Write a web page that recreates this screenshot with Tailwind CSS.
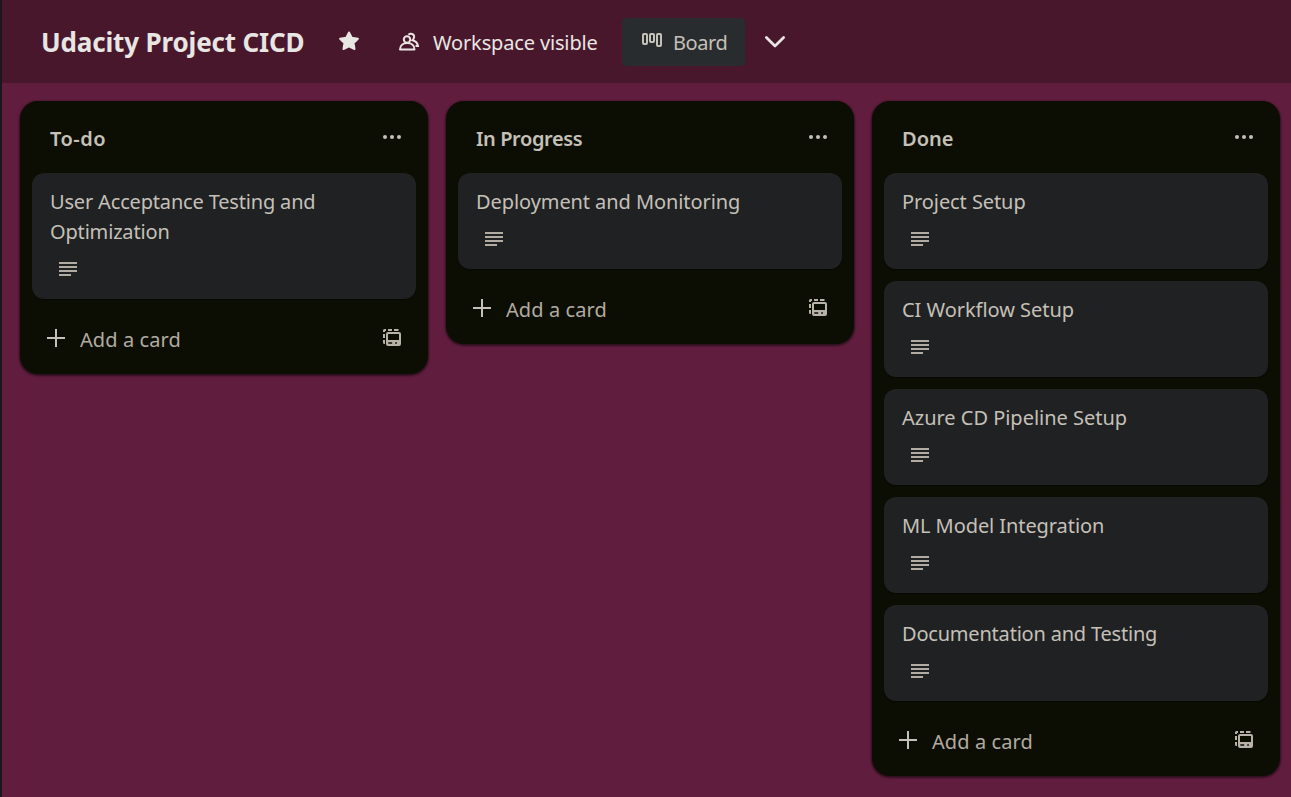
<!DOCTYPE html>
<html lang="en">
<head>
<meta charset="utf-8">
<title>Udacity Project CICD</title>
<script src="https://cdn.jsdelivr.net/npm/@tailwindcss/browser@4"></script>
</head>
<body class="h-[797px] w-[1291px] overflow-hidden border-l-2 border-[#1b171c] bg-[#611d3d] font-['Segoe_UI','Noto_Sans',sans-serif] text-[20px] text-[#c5c0b8]">
<svg class="hidden">
  <symbol id="dots" viewBox="0 0 18 4"><g fill="currentColor"><circle cx="2" cy="2" r="2"/><circle cx="9" cy="2" r="2"/><circle cx="16" cy="2" r="2"/></g></symbol>
  <symbol id="desc" viewBox="0 0 18 14"><path fill="currentColor" d="M0 0h18v2H0zM0 4h18v2H0zM0 8h18v2H0zM0 12h12v2H0z"/></symbol>
  <symbol id="plus" viewBox="0 0 18 18"><path fill="currentColor" d="M8 0h2v8h8v2h-8v8H8v-8H0V8h8z"/></symbol>
  <symbol id="tpl" viewBox="0 0 18 17"><path fill="currentColor" fill-rule="evenodd" d="M5 3h11a2 2 0 0 1 2 2v10a2 2 0 0 1-2 2H5a2 2 0 0 1-2-2V5a2 2 0 0 1 2-2zM5 5v6h11V5zM5.300 13.200v1.500h3.900v-1.500zM12.200 13.200v1.500h1.700v-1.500z"/><path fill="currentColor" d="M0 3V1.500Q0 0 1.500 0H3v2H2v1zM5 0h4v2H5zM11 0h4.500v2H11zM0 5h2v4H0zM0 11h2v4H1.500Q0 15 0 13.500z"/></symbol>
</svg>
<header class="flex h-[83px] items-center bg-[#49172c] pl-[39px] text-[#e8e6e3]">
  <h1 class="w-[297px] whitespace-nowrap text-[26px] leading-[36px] font-bold tracking-[-0.15px]">Udacity Project CICD</h1>
  <svg class="mb-[2px] h-[20px] w-[22px]" viewBox="0 0 22 20"><path fill="currentColor" stroke="currentColor" stroke-width="2" stroke-linejoin="round" d="M11 1.500l2.700 5.200 6.200 1-4.400 4.300 1 6L11 15.400 5.500 18l1-6L2.100 7.700l6.200-1z"/></svg>
  <svg class="ml-[38px] h-[20px] w-[22px]" viewBox="0 0 22 20" fill="none" stroke="currentColor" stroke-width="2"><circle cx="9" cy="7.500" r="3.200"/><path stroke-linejoin="round" d="M2 17.500h14.500c0-4-3-6.500-7.200-6.500S2 13.500 2 17.500z"/><path d="M10.500 2.700c2-2 6-.8 5.600 2.300-.1 1.800-.8 2.500-1.600 3.300 3 .8 5 2.500 5.500 5.700h-2.500"/></svg>
  <span class="ml-[13px] w-[189px] pt-[2px] whitespace-nowrap leading-[30px] tracking-[-0.15px]">Workspace visible</span>
  <div class="flex h-[48px] w-[123px] items-center rounded-[4px] bg-[#282c2e] pl-[20px] text-[#c5c0b8]">
    <svg class="mb-[3px] h-[14px] w-[20px]" viewBox="0 0 20 14" fill="none" stroke="currentColor" stroke-width="2"><rect x="1" y="1" width="4" height="10" rx="1"/><rect x="8" y="1" width="4" height="8" rx="1"/><rect x="15" y="1" width="4" height="12" rx="1"/></svg>
    <span class="ml-[11px] pt-[2px] leading-[30px] tracking-[-0.45px]">Board</span>
  </div>
  <svg class="ml-[20px] h-[12px] w-[20px]" viewBox="0 0 20 12" fill="none" stroke="currentColor" stroke-width="2.700" stroke-linecap="round" stroke-linejoin="round"><path d="M1.400 1.500L10 10l8.600-8.500"/></svg>
</header>
<main id="board" class="flex items-start gap-[18px] pt-[18px] pl-[18px]"></main>
<template id="column"><section class="w-[408px] shrink-0 rounded-[18px] bg-[#0c0e04] px-[12px] shadow-[0_1px_2px_1px_rgba(12,8,10,0.6)]">
  <div class="flex h-[72px] items-center justify-between pr-[15px] pl-[18px]"><h2 class="pt-[3px] leading-[30px] font-semibold"></h2><svg class="h-[4px] w-[18px]"><use href="#dots"/></svg></div>
  <div class="cards flex flex-col gap-[12px]"></div>
  <div class="flex h-[75px] items-center pr-[15px] pl-[15px]"><svg class="mt-[3px] h-[18px] w-[18px]"><use href="#plus"/></svg><span class="ml-[15px] grow pt-[7px] leading-[30px] tracking-[0.08px] text-[#b2aba1]">Add a card</span><svg class="mt-[2px] h-[17px] w-[18px] text-[#b8b2a7]"><use href="#tpl"/></svg></div>
</section></template>
<template id="card"><article class="rounded-[12px] bg-[#1f2123] px-[18px] pt-[14px] pb-[23px] shadow-[0_1px_1px_rgba(5,5,5,0.6)]"><p class="leading-[30px]"></p><svg class="mt-[15px] ml-[9px] h-[14px] w-[18px] text-[#b2aba1]"><use href="#desc"/></svg></article></template>
<script>
// Each column: title, title tracking, cards as [text, tracking].
const columns = [
  ['To-do', 'tracking-[0.5px]', [['User Acceptance Testing and<br>Optimization', 'tracking-[-0.17px]']]],
  ['In Progress', 'tracking-[-0.4px]', [['Deployment and Monitoring', 'tracking-[-0.08px]']]],
  ['Done', 'tracking-normal', [['Project Setup', 'tracking-[-0.08px]'], ['CI Workflow Setup', 'tracking-[-0.04px]'], ['Azure CD Pipeline Setup', 'tracking-[-0.02px]'], ['ML Model Integration', 'tracking-[-0.08px]'], ['Documentation and Testing', 'tracking-[-0.2px]']]]
];
for (const [name, spacing, cards] of columns) {
  const col = document.getElementById('column').content.cloneNode(true);
  col.querySelector('h2').textContent = name;
  col.querySelector('h2').classList.add(spacing);
  for (const [title, track] of cards) {
    const card = document.getElementById('card').content.cloneNode(true);
    card.querySelector('p').innerHTML = title;
    card.querySelector('p').classList.add(track);
    col.querySelector('.cards').append(card);
  }
  document.getElementById('board').append(col);
}
</script>
</body>
</html>
